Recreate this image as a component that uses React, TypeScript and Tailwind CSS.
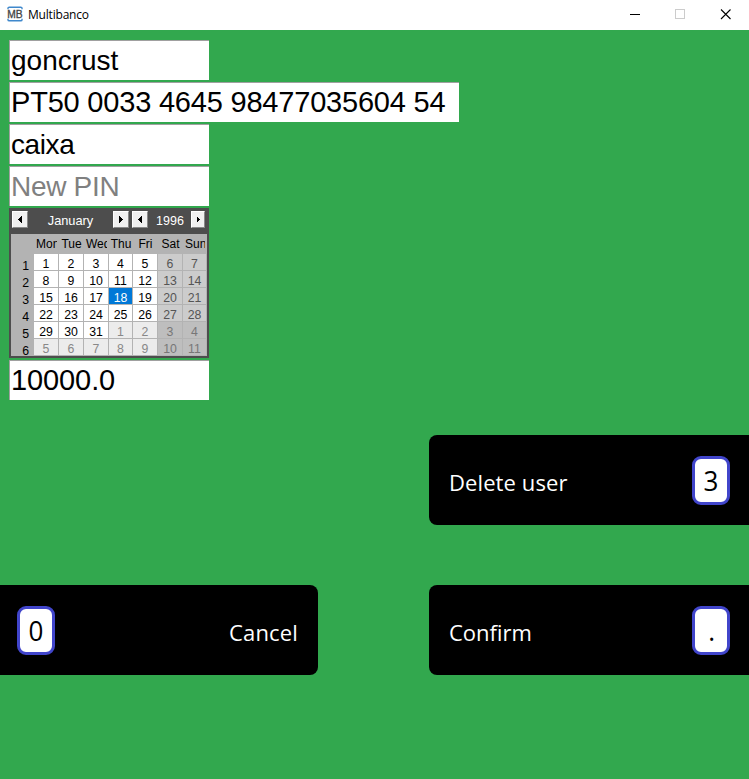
import React from "react";

const DAYS = ["Mon", "Tue", "Wed", "Thu", "Fri", "Sat", "Sun"];
const WEEKS = [
  [1, 2, 3, 4, 5, 6, 7],
  [8, 9, 10, 11, 12, 13, 14],
  [15, 16, 17, 18, 19, 20, 21],
  [22, 23, 24, 25, 26, 27, 28],
  [29, 30, 31, 1, 2, 3, 4],
  [5, 6, 7, 8, 9, 10, 11],
];
const COLUMNS = "grid grid-cols-[23px_25px_25px_25px_24px_25px_25px_24px]";

function TitleBar() {
  return (
    <header className="flex h-[30px] items-center bg-white pl-[7px]">
      <svg width="16" height="16" viewBox="0 0 16 16" className="-mt-0.5">
        <path d="M1 3.2V2Q1 1.2 2.3 1.2H13.7Q15 1.2 15 2V3.2M1 12.8V14Q1 14.8 2.3 14.8H13.7Q15 14.8 15 14V12.8" fill="none" stroke="#3f88cc" strokeWidth="1.4" />
        <text x="0.2" y="11.6" textLength="15.4" lengthAdjust="spacingAndGlyphs" fontFamily="Liberation Sans, sans-serif" fontSize="10" fill="#444" stroke="#444" strokeWidth="0.3">MB</text>
      </svg>
      <h1 className="ml-[5px] font-['Open_Sans',sans-serif] text-[12px] leading-4 tracking-[-0.2px] text-black">Multibanco</h1>
      <div className="mr-[18px] -mt-px ml-auto flex gap-[34px]">
        <svg width="11" height="11" shapeRendering="crispEdges"><path d="M0 5.5H10" stroke="#000" /></svg>
        <svg width="11" height="11" shapeRendering="crispEdges"><path d="M.5 .5H9.5V9.5H.5Z" fill="none" stroke="#ccc" /></svg>
        <svg width="11" height="11"><path d="M1 .5L10.5 10M10.5 .5L1 10" stroke="#000" strokeWidth="1.1" /></svg>
      </div>
    </header>
  );
}

function Field({ value, className }: { value: string; className: string }) {
  return (
    <div className={`h-10 border-t border-l border-[#a0a0a0] bg-white pl-px leading-[39px] whitespace-nowrap ${className}`}>
      {value}
    </div>
  );
}

function Arrow({ left, narrow }: { left?: boolean; narrow?: boolean }) {
  return (
    <button className={`flex h-[17px] items-center justify-center border-t border-l border-r border-b border-t-white border-l-white border-r-[#888] border-b-[#888] bg-[#f0f0f0] ${narrow ? "w-[14px]" : "w-4"}`}>
      {narrow ? (
        <svg width="3" height="5" shapeRendering="crispEdges"><path d="M0 0V5L3 2.5Z" fill="#000" /></svg>
      ) : (
        <svg width="4" height="7" shapeRendering="crispEdges"><path d={left ? "M4 0V7L0 3.5Z" : "M0 0V7L4 3.5Z"} fill="#000" /></svg>
      )}
    </button>
  );
}

function cellColor(week: number, col: number, day: number) {
  const other = week >= 4 && day < 15;
  const weekend = col > 4;
  if (week === 2 && day === 18) return "bg-[#0078d7] text-white";
  if (other && weekend) return "bg-[#bebebe] text-[#777]";
  if (other) return "bg-[#ececec] text-[#888]";
  if (weekend) return "bg-[#cccccc] text-[#555]";
  return "bg-white text-black";
}

function Calendar() {
  return (
    <section className="h-[150px] w-[200px] overflow-hidden border-2 border-t-0 border-[#4d4d4d] bg-[#b3b3b3] text-[12.3px]">
      <div className="flex h-[26px] items-center bg-[#4d4d4d] pr-[2px] pb-[3px] pl-px text-white">
        <Arrow left />
        <span className="w-[85px] pt-[3px] text-center text-[12.8px] leading-4">January</span>
        <Arrow />
        <span className="w-[3px]" />
        <Arrow left />
        <span className="w-[43px] pt-[3px] pl-px text-center text-[12.5px] leading-4">1996</span>
        <Arrow narrow />
      </div>
      <div className={`${COLUMNS} h-5 text-[12px]`}>
        <span />
        {DAYS.map((d, i) => (
          <span key={d} className={`flex overflow-hidden leading-5 text-black ${i === 0 || i === 2 || i === 6 ? "mr-0.5 pl-0.5" : "justify-center"}`}>{d}</span>
        ))}
      </div>
      {WEEKS.map((week, w) => (
        <div key={w} className={`${COLUMNS} h-[17px]`}>
          <span className="h-[17px] pt-[4px] pr-[5px] text-right leading-[17px] text-black">{w + 1}</span>
          {week.map((day, c) => (
            <span key={c} className={`h-[17px] overflow-hidden border-r border-b border-[#b3b3b3] text-center leading-[20px] ${cellColor(w, c, day)}`}>{day}</span>
          ))}
        </div>
      ))}
    </section>
  );
}

function Key({ children }: { children: string }) {
  return (
    <span className="flex h-[49px] w-[38px] items-center justify-center rounded-[9px] border-[3px] border-[#4145cb] bg-white text-[28px] leading-none text-black">
      <span className="scale-x-[.93] pl-px">{children}</span>
    </span>
  );
}

export default function App() {
  return (
    <div className="flex h-[779px] w-[749px] flex-col overflow-hidden bg-[#32a84e] font-['Liberation_Sans',Arial,sans-serif]">
      <TitleBar />
      <main className="flex flex-col">
        <form className="mt-2.5 ml-[9px] flex flex-col items-start gap-0.5">
          <Field value="goncrust" className="w-[200px] text-[28px] text-black" />
          <Field value="PT50 0033 4645 98477035604 54" className="w-[450px] text-[29px] tracking-[-0.2px] text-black" />
          <Field value="caixa" className="w-[200px] text-[28px] tracking-[-0.4px] text-black" />
          <Field value="New PIN" className="w-[200px] text-[28px] tracking-[-0.3px] text-[#808080]" />
          <Calendar />
          <Field value="10000.0" className="w-[200px] text-[29px] tracking-[-0.1px] text-black" />
        </form>
        <div className="mt-[35px] flex flex-col gap-[60px] font-['Open_Sans',sans-serif] text-[22px] text-white">
          <div className="flex h-[90px] w-[320px] items-center justify-between self-end rounded-l-lg bg-black pr-[19px] pl-5">
            <span className="pt-1 tracking-[0.1px]">Delete user</span>
            <Key>3</Key>
          </div>
          <div className="flex justify-between">
            <div className="flex h-[90px] w-[318px] items-center justify-between rounded-r-lg bg-black pr-5 pl-[17px]">
              <Key>0</Key>
              <span className="pt-1 tracking-[0.15px]">Cancel</span>
            </div>
            <div className="flex h-[90px] w-[320px] items-center justify-between rounded-l-lg bg-black pr-[19px] pl-5">
              <span className="pt-1">Confirm</span>
              <Key>.</Key>
            </div>
          </div>
        </div>
      </main>
    </div>
  );
}
